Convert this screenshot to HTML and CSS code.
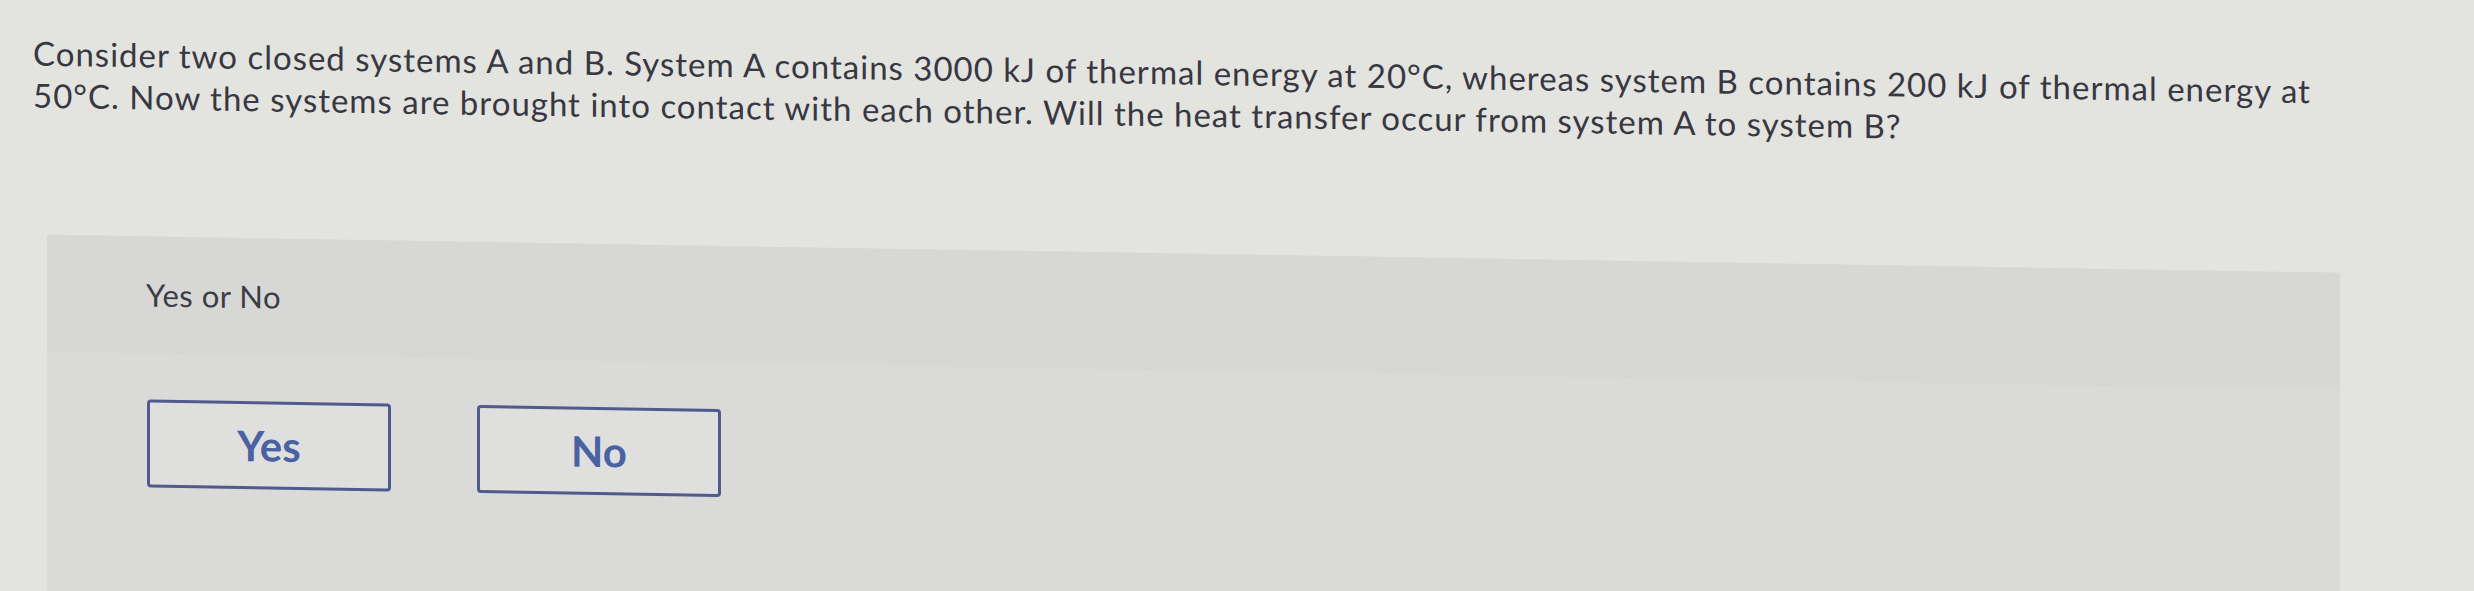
FILE: index.html
```html
<!DOCTYPE html>
<html>
    <head>
    <title>Question</title>
    <link rel="stylesheet" href="styles.css">
    </head>
    <body>
        <div class="screen">
            <div class="page">
                <p class="question">
                    Consider two closed systems A and B. System A contains 3000 kJ of thermal energy at 20°C, whereas system B contains 200 kJ of thermal energy at 50°C. Now the systems are brought into contact with each other. Will the heat transfer occur from system A to system B?
                </p>

                <div class="answerBox">
                    <div class="prompt">
                        <p class="promptText">Yes or No</p>
                    </div>
                    <div class="choices">
                        <button class="choice">Yes</button>
                        <button class="choice">No</button>
                    </div>
                </div>
            </div>
        </div>
    </body>
</html>
```

FILE: styles.css
```css
body{
    margin: 0;
    background-color: #e3e3df;
    font-family: Lato, "Liberation Sans", sans-serif;
    overflow: hidden;
}
.screen{
    height: 591px;
    overflow: hidden;
}
/* the screen is seen at a slight angle, so everything leans down to the right */
.page{
    height: 591px;
    transform: skewY(0.95deg);
    transform-origin: 0 0;
}
.question{
    margin: 0;
    padding: 31px 0 0 33px;
    width: 2320px;
    font-size: 33px;
    letter-spacing: 1px;
    line-height: 42px;
    color: #383842;
}
.answerBox{
    margin: 119px 0 0 47px;
    width: 2293px;
    height: 400px;
    background-color: #dadad8;
    border-radius: 3px 3px 0 0;
}
.prompt{
    height: 117px;
    padding: 40px 0 0 99px;
    box-sizing: border-box;
    background-color: #d7d7d5;
    border-radius: 3px 3px 0 0;
}
.promptText{
    margin: 0;
    font-size: 31px;
    letter-spacing: 0.5px;
    line-height: 36px;
    color: #3c3c46;
}
.choices{
    display: flex;
    gap: 86px;
    padding: 46px 0 0 100px;
}
.choice{
    width: 244px;
    height: 88px;
    background-color: #dfdfdd;
    border: 3px solid #4f5b8c;
    border-radius: 4px;
    font-family: Lato, "Liberation Sans", sans-serif;
    font-weight: bold;
    font-size: 42px;
    color: #4a62a2;
}
```
